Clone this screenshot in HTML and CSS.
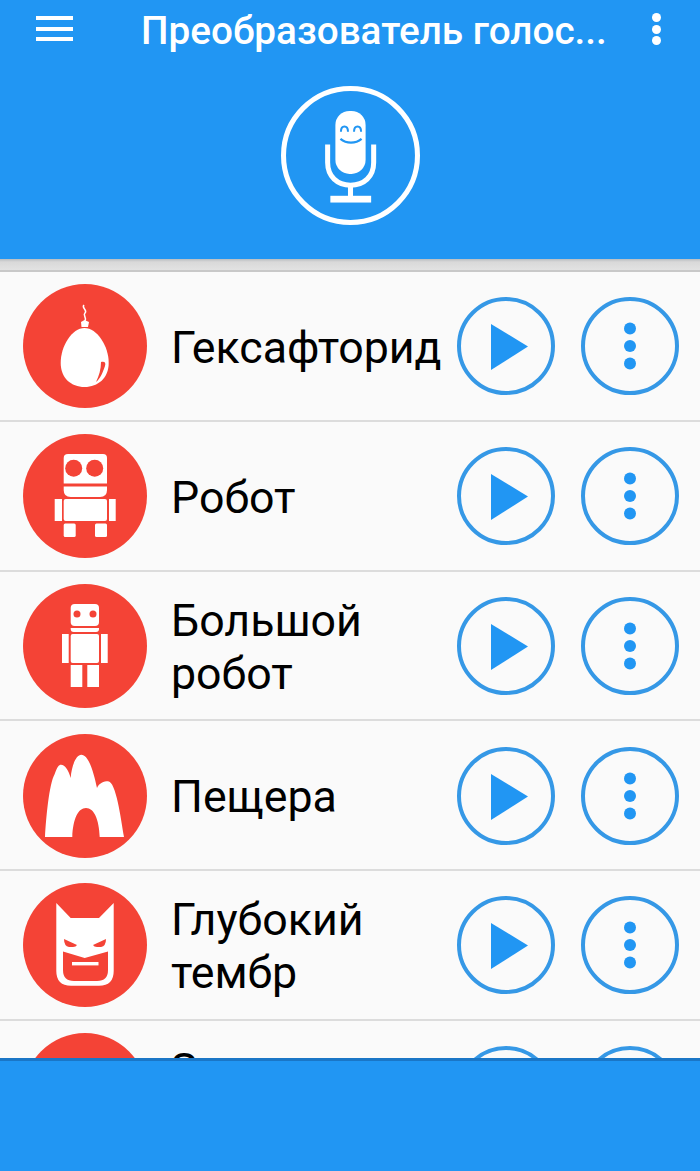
FILE: index.html
```html
<!DOCTYPE html>
<html lang="ru">
<head>
    <meta charset="UTF-8">
    <title>Преобразователь голоса</title>
    <link rel="stylesheet" href="styles.css">
</head>
<body>
    <svg class="sprites" width="0" height="0">
        <symbol id="play" viewBox="0 0 98 98">
            <path d="M34 27 L71 49.5 L34 73 Z" fill="#2196f3"/>
        </symbol>
        <symbol id="more" viewBox="0 0 98 98">
            <circle cx="49" cy="31.5" r="6" fill="#2196f3"/>
            <circle cx="49" cy="49" r="6" fill="#2196f3"/>
            <circle cx="49" cy="66.5" r="6" fill="#2196f3"/>
        </symbol>
    </svg>

    <div class="app">
        <header class="top">
            <div class="toolbar">
                <div class="burger"><span></span><span></span><span></span></div>
                <h1 class="title">Преобразователь голос...</h1>
                <div class="dots"><span></span><span></span><span></span></div>
            </div>
            <svg class="mic" viewBox="0 0 138 138">
                <circle cx="69" cy="69" r="66.5" fill="none" stroke="#fff" stroke-width="5"/>
                <rect x="54" y="24.7" width="30" height="62.6" rx="14" fill="#fff"/>
                <path d="M46.3 58 V76 C46.3 90 56 98.5 69 98.5 C82.5 98.5 92 90 92 76 V58" fill="none" stroke="#fff" stroke-width="5"/>
                <rect x="66.5" y="98" width="5" height="13" fill="#fff"/>
                <rect x="49" y="109" width="40.5" height="6.7" fill="#fff"/>
                <path d="M59.5 45.5 C59.5 38.5 66.5 38.5 66.5 45.5 M72.5 45.5 C72.5 38.5 79.5 38.5 79.5 45.5" fill="none" stroke="#2196f3" stroke-width="2"/>
                <path d="M59 52.5 C65 57.5 74 57.5 80 52.5" fill="none" stroke="#2196f3" stroke-width="2.2"/>
            </svg>
        </header>
        <div class="top-shadow"></div>

        <div class="voices">
            <div class="voice">
                <svg class="avatar" viewBox="0 0 124 124">
                    <circle cx="62" cy="62" r="62" fill="#f44336"/>
                    <path d="M61 21 C58 24 65 26 62 29 C59.5 31.5 64 33 62 37" fill="none" stroke="#fff" stroke-width="1.5"/>
                    <path d="M58 38 L61.5 36 L66 38 L65 43 L58.5 43 Z" fill="#fff"/>
                    <path d="M61.5 44 C74 44 85.7 62 85.7 79 C85.7 94 75 103 61.5 103 C48 103 37.7 94 37.7 79 C37.7 62 49 44 61.5 44 Z" fill="#fff"/>
                    <path d="M78 78 C82 77 83 79 82 82 C80 88 77 95 73 98 C76 92 78 85 78 78 Z" fill="#f44336"/>
                </svg>
                <div class="voice-name">Гексафторид</div>
                <div class="round-btn"><svg viewBox="0 0 98 98"><use href="#play"/></svg></div>
                <div class="round-btn"><svg viewBox="0 0 98 98"><use href="#more"/></svg></div>
            </div>

            <div class="voice">
                <svg class="avatar" viewBox="0 0 124 124">
                    <circle cx="62" cy="62" r="62" fill="#f44336"/>
                    <path d="M45 20 H80 Q84 20 84 24 V49.5 H40.7 V24 Q40.7 20 45 20 Z" fill="#fff"/>
                    <path d="M40.7 52.5 H84 V56 Q84 63 77 63 H47.7 Q40.7 63 40.7 56 Z" fill="#fff"/>
                    <circle cx="50.7" cy="34.3" r="8.5" fill="#f44336"/>
                    <circle cx="71.7" cy="34.3" r="8.5" fill="#f44336"/>
                    <rect x="40.7" y="65" width="43.3" height="22" rx="2" fill="#fff"/>
                    <rect x="31.7" y="65" width="7.3" height="22" fill="#fff"/>
                    <rect x="86" y="65" width="6.7" height="22" fill="#fff"/>
                    <rect x="40.7" y="89.5" width="12" height="13.5" rx="1.5" fill="#fff"/>
                    <rect x="72" y="89.5" width="12" height="13.5" rx="1.5" fill="#fff"/>
                </svg>
                <div class="voice-name">Робот</div>
                <div class="round-btn"><svg viewBox="0 0 98 98"><use href="#play"/></svg></div>
                <div class="round-btn"><svg viewBox="0 0 98 98"><use href="#more"/></svg></div>
            </div>

            <div class="voice">
                <svg class="avatar" viewBox="0 0 124 124">
                    <circle cx="62" cy="62" r="62" fill="#f44336"/>
                    <rect x="47.7" y="20" width="28.3" height="22" rx="4" fill="#fff"/>
                    <circle cx="54" cy="30" r="3.5" fill="#f44336"/>
                    <circle cx="70" cy="30" r="3.5" fill="#f44336"/>
                    <path d="M47.7 44 H76 V45 Q76 48 73 48 H50.7 Q47.7 48 47.7 45 Z" fill="#fff"/>
                    <rect x="47.7" y="50" width="28.3" height="29" rx="2" fill="#fff"/>
                    <rect x="39" y="50" width="6.7" height="29" fill="#fff"/>
                    <rect x="78" y="50" width="6.7" height="29" fill="#fff"/>
                    <rect x="47.7" y="81" width="11.6" height="22" fill="#fff"/>
                    <rect x="64.3" y="81" width="11.7" height="22" fill="#fff"/>
                </svg>
                <div class="voice-name">Большой робот</div>
                <div class="round-btn"><svg viewBox="0 0 98 98"><use href="#play"/></svg></div>
                <div class="round-btn"><svg viewBox="0 0 98 98"><use href="#more"/></svg></div>
            </div>

            <div class="voice">
                <svg class="avatar" viewBox="0 0 124 124">
                    <circle cx="62" cy="62" r="62" fill="#f44336"/>
                    <path d="M22 103 C23 85 26 50 31.7 40 C34 33 36 30.7 38 30.7 C42 30.7 46 37 47.7 44 C48.5 32 53 20.7 58.3 20.7 C66 20.7 71 40 74 54 C76 49 81 47.3 85 47.3 C93 47.3 98 85 101 103 H76.7 C76 85 71 74 63 74 C55 74 50 85 49.3 103 Z" fill="#fff"/>
                </svg>
                <div class="voice-name">Пещера</div>
                <div class="round-btn"><svg viewBox="0 0 98 98"><use href="#play"/></svg></div>
                <div class="round-btn"><svg viewBox="0 0 98 98"><use href="#more"/></svg></div>
            </div>

            <div class="voice">
                <svg class="avatar" viewBox="0 0 124 124">
                    <circle cx="62" cy="62" r="62" fill="#f44336"/>
                    <path d="M33.3 20 L47.7 35 H76 L90.7 20 V88 Q90.7 102.7 76 102.7 H48 Q33.3 102.7 33.3 88 Z" fill="#fff"/>
                    <path d="M40 68.5 L61.7 75 L85 68.5 V87 Q85 98 74 98 H51 Q40 98 40 87 Z" fill="#f44336"/>
                    <path d="M41 56 L54 62 Q53 64 50 64 H46 Q41 63 41 56 Z" fill="#f44336"/>
                    <path d="M83 56 L70 62 Q71 64 74 64 H78 Q83 63 83 56 Z" fill="#f44336"/>
                    <rect x="49" y="79" width="26.5" height="3.4" fill="#fff"/>
                </svg>
                <div class="voice-name">Глубокий тембр</div>
                <div class="round-btn"><svg viewBox="0 0 98 98"><use href="#play"/></svg></div>
                <div class="round-btn"><svg viewBox="0 0 98 98"><use href="#more"/></svg></div>
            </div>

            <div class="voice">
                <svg class="avatar" viewBox="0 0 124 124">
                    <circle cx="62" cy="62" r="62" fill="#f44336"/>
                </svg>
                <div class="voice-name">Задом наперед</div>
                <div class="round-btn"><svg viewBox="0 0 98 98"><use href="#play"/></svg></div>
                <div class="round-btn"><svg viewBox="0 0 98 98"><use href="#more"/></svg></div>
            </div>
        </div>

        <footer class="bottom"></footer>
    </div>
</body>
</html>
```

FILE: styles.css
```css
* {
    box-sizing: border-box;
}
body {
    margin: 0;
    font-family: Roboto, 'Noto Sans', sans-serif;
    background: #fafafa;
    color: #000;
}
.sprites {
    display: block;
    height: 0;
}
.app {
    height: 1171px;
    display: flex;
    flex-direction: column;
    overflow: hidden;
}
.top {
    height: 259px;
    flex-shrink: 0;
    background: #2196f3;
    display: flex;
    flex-direction: column;
    align-items: center;
}
.toolbar {
    width: 100%;
    height: 86px;
    flex-shrink: 0;
    display: flex;
    align-items: flex-start;
    padding-left: 36px;
    color: white;
}
.burger {
    width: 37px;
    margin-top: 16px;
    margin-right: 68px;
    display: flex;
    flex-direction: column;
    gap: 6.5px;
}
.burger span {
    height: 4px;
    background: white;
}
.title {
    width: 471px;
    margin: 8px 0 0;
    font-size: 38.7px;
    line-height: 46px;
    font-weight: 500;
    white-space: nowrap;
}
.dots {
    margin-left: 40px;
    margin-top: 13px;
    display: flex;
    flex-direction: column;
    gap: 2.7px;
}
.dots span {
    width: 9px;
    height: 9px;
    border-radius: 50%;
    background: white;
}
.mic {
    width: 139px;
    height: 139px;
}
.top-shadow {
    height: 13px;
    flex-shrink: 0;
    background: linear-gradient(#b9bdc0, #d9d9d9 3px, #e2e2e2);
    border-bottom: 2px solid #c8c8c8;
}
.voices {
    flex: 1;
    overflow: hidden;
}
.voice {
    height: 149.75px;
    padding: 1px 21px 0 23px;
    border-bottom: 2px solid #dcdcdc;
    display: flex;
    align-items: center;
}
.avatar {
    width: 124px;
    height: 124px;
    flex-shrink: 0;
}
.voice-name {
    flex: 1;
    min-width: 0;
    margin-left: 24px;
    padding-top: 4px;
    font-size: 44.7px;
    line-height: 53px;
}
.round-btn {
    width: 98px;
    height: 98px;
    flex-shrink: 0;
    margin-left: 26px;
    border: 4px solid #3598e6;
    border-radius: 50%;
    display: flex;
    align-items: center;
    justify-content: center;
}
.voice-name + .round-btn {
    margin-left: 0;
}
.round-btn svg {
    width: 98px;
    height: 98px;
    flex-shrink: 0;
}
.bottom {
    height: 113px;
    flex-shrink: 0;
    background: #2196f3;
    border-top: 3px solid #1a76c6;
}
```
